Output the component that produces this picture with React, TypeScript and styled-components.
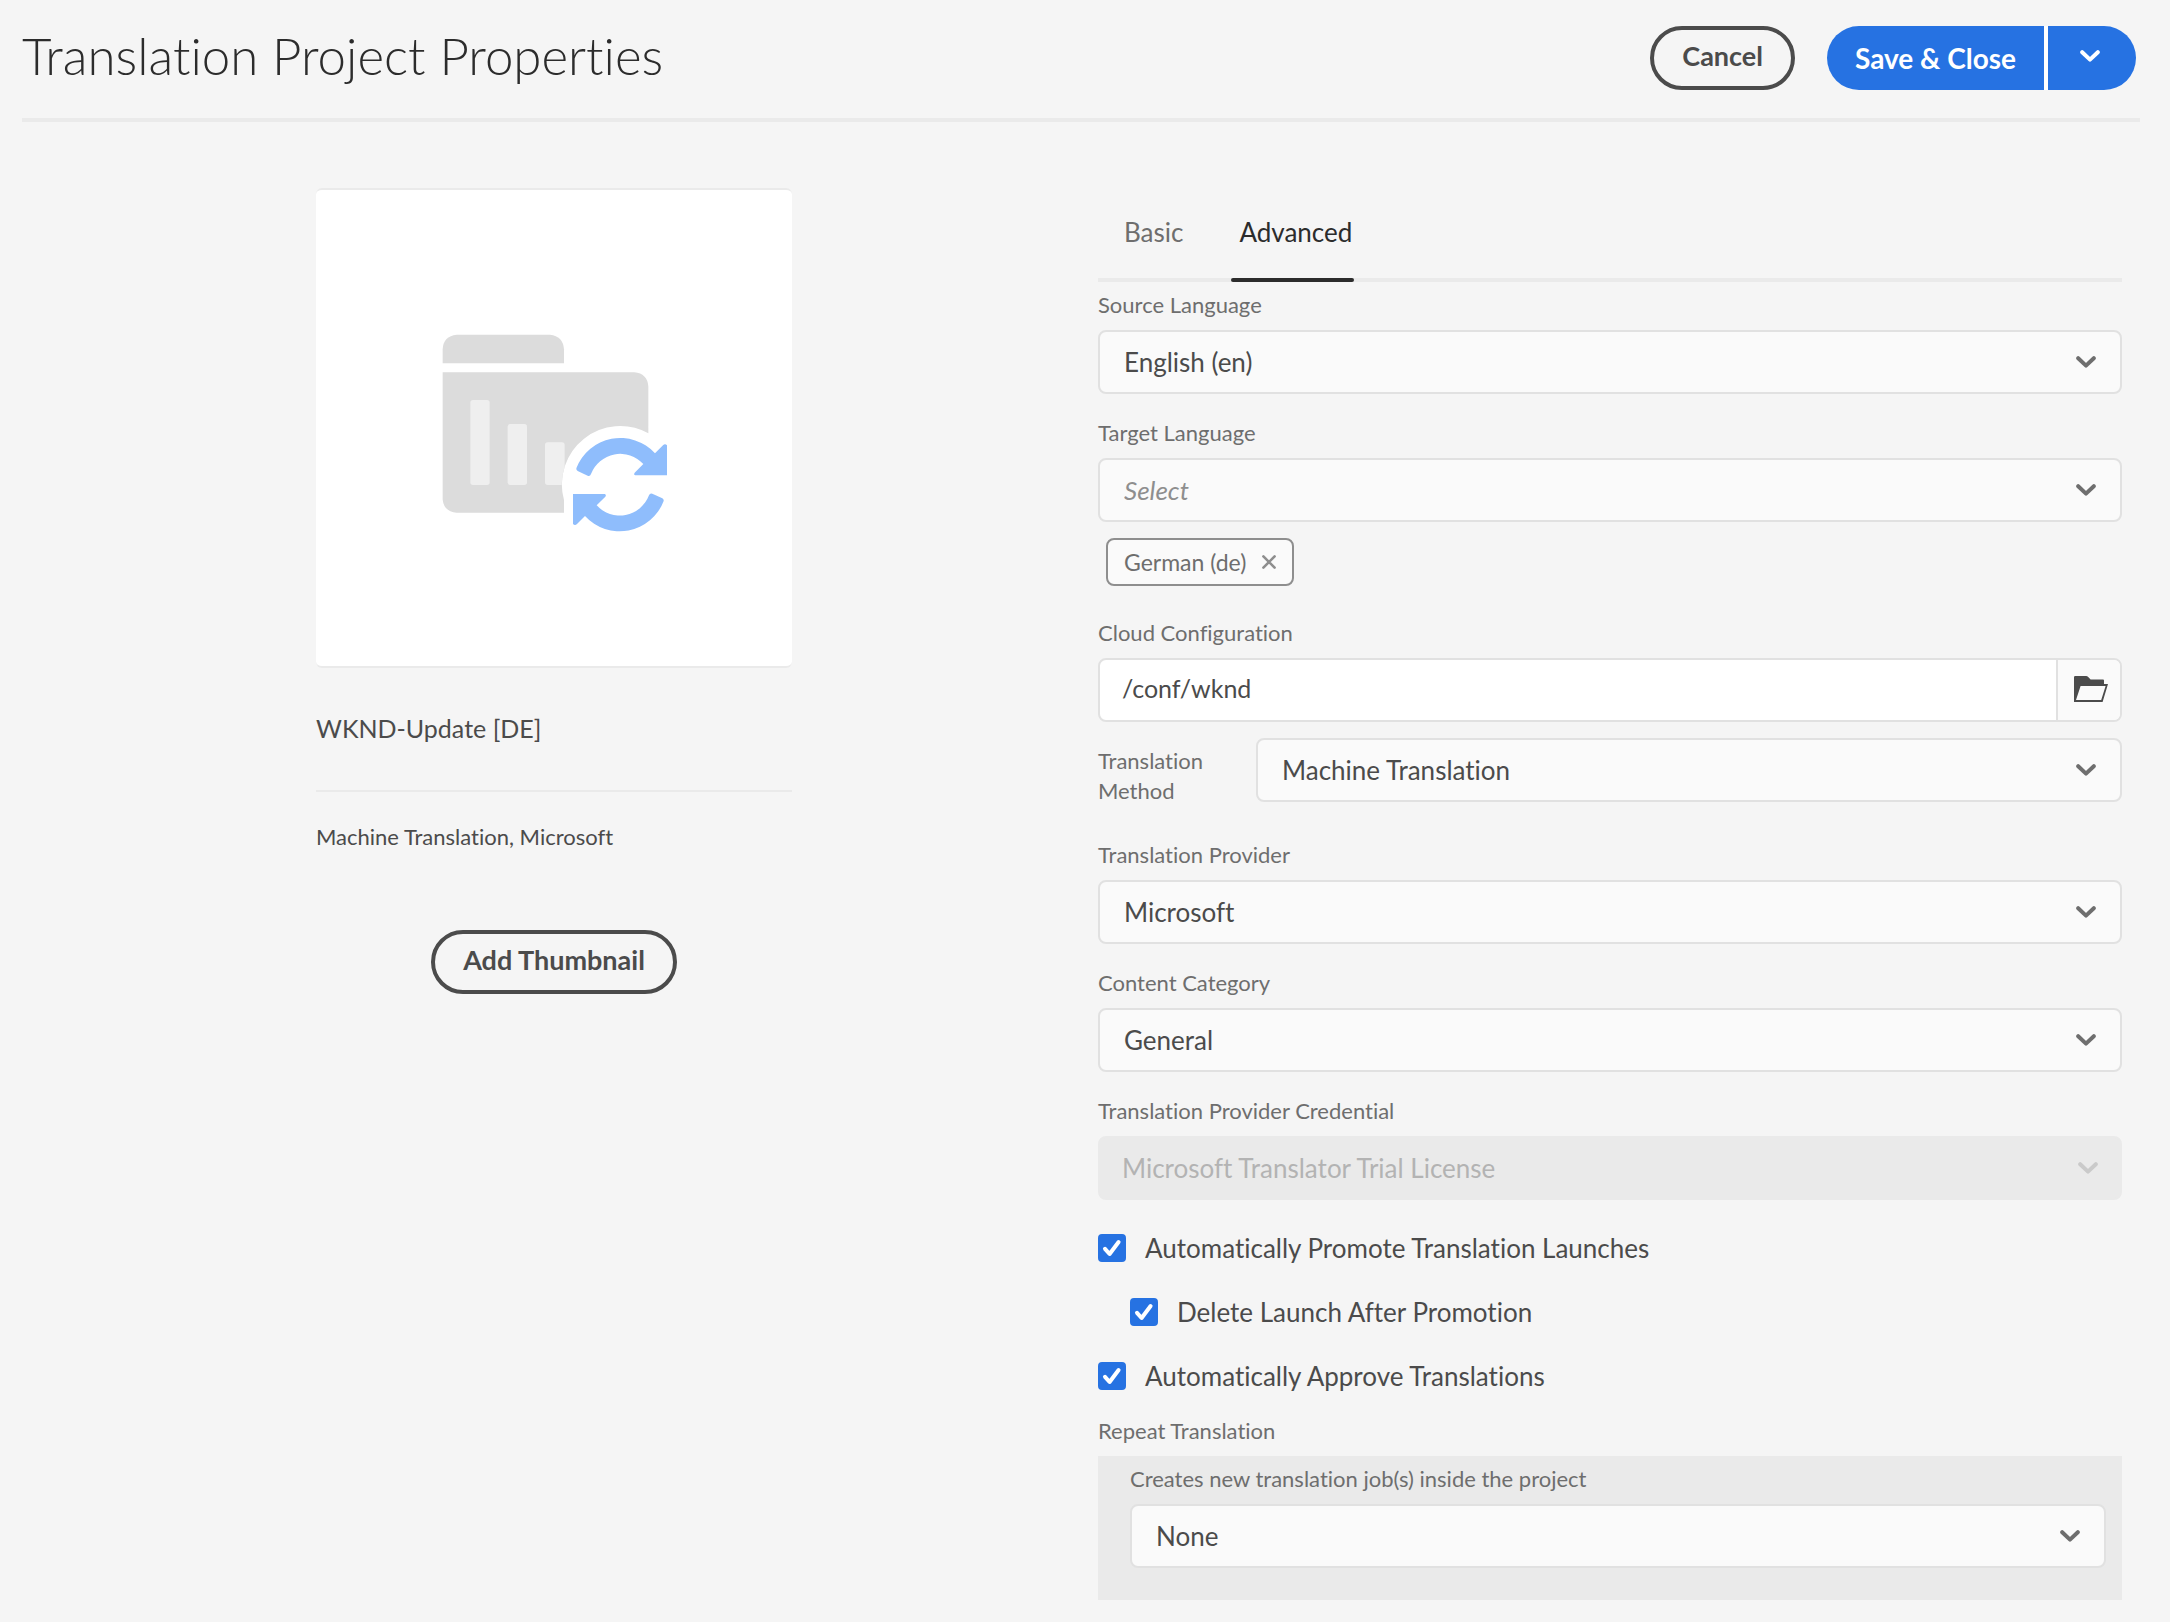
import React from "react";
import styled, { createGlobalStyle } from "styled-components";

const GlobalStyle = createGlobalStyle`
  *, *::before, *::after { box-sizing: border-box; }
  body {
    margin: 0;
    background: #f5f5f5;
    color: #4b4b4b;
    font-family: Lato, "Noto Sans", "Liberation Sans", sans-serif;
    font-size: 26px;
    line-height: 32px;
    font-variant-ligatures: no-common-ligatures;
  }
  button, input, select { font: inherit; color: inherit; margin: 0; }
  button { cursor: pointer; }
`;

const Header = styled.header`
  display: flex;
  align-items: flex-start;
  justify-content: space-between;
  margin: 0 30px 0 22px;
  padding: 26px 4px 28px 0;
  border-bottom: 4px solid #eaeaea;
`;

const PageTitle = styled.h1`
  margin: 0;
  color: #2c2c2c;
  font-size: 51px;
  line-height: 60px;
  font-weight: 300;
`;

const Actions = styled.div`
  display: flex;
  gap: 32px;
`;

const OutlineButton = styled.button`
  height: 64px;
  padding: 0 28px 4px;
  border: 4px solid #4b4b4b;
  border-radius: 32px;
  background: transparent;
  font-size: 27px;
  font-weight: 700;
`;

const SplitButton = styled.div`
  display: flex;
  gap: 4px;
  border-radius: 32px;
  overflow: hidden;
  background: #fff;
`;

const PrimaryButton = styled.button<{ $menu?: boolean }>`
  display: flex;
  align-items: center;
  justify-content: center;
  height: 64px;
  padding: ${(p) => (p.$menu ? "0 36px 4px 32px" : "0 28px")};
  border: 0;
  background: #2672e2;
  color: #fff;
  font-size: 28px;
  font-weight: 700;
`;

const Main = styled.main`
  display: grid;
  grid-template-columns: minmax(0, 1fr) minmax(0, 1fr);
  padding: 66px 48px 22px 22px;
`;

const Summary = styled.section`
  display: flex;
  flex-direction: column;
  align-items: center;
  padding-left: 14px;
`;

const Card = styled.div`
  width: 100%;
  max-width: 476px;
  text-align: center;
`;

const Thumbnail = styled.svg`
  display: block;
  width: 100%;
  background: #fff;
  border: solid #eaeaea;
  border-width: 2px 0;
  border-radius: 6px;
`;

const ProjectName = styled.h2`
  margin: 0;
  padding: 44px 0 46px;
  border-bottom: 2px solid #eaeaea;
  font-size: 25px;
  line-height: 32px;
  font-weight: 400;
  text-align: left;
`;

const ProjectMeta = styled.p`
  margin: 30px 0 78px;
  font-size: 22px;
  line-height: 30px;
  text-align: left;
`;

const Form = styled.form`
  padding-left: 26px;
`;

const TabList = styled.div`
  display: flex;
  gap: 46px;
  padding-left: 18px;
  margin-bottom: 8px;
  box-shadow: inset 0 -4px #eaeaea;
`;

const Tab = styled.button<{ $active?: boolean }>`
  display: flex;
  flex-direction: column;
  justify-content: space-between;
  height: 94px;
  padding: 28px 2px 0 8px;
  border: 0;
  background: none;
  color: ${(p) => (p.$active ? "#2c2c2c" : "#6e6e6e")};

  &::after {
    content: "";
    align-self: stretch;
    height: 4px;
    margin: 0 -2px 0 -8px;
    border-radius: 2px;
    background: ${(p) => (p.$active ? "#2c2c2c" : "transparent")};
  }
`;

const Field = styled.div<{ $tight?: boolean; $last?: boolean }>`
  display: flex;
  flex-direction: column;
  gap: 10px;
  margin-bottom: ${(p) => (p.$last ? 0 : p.$tight ? 16 : 24)}px;
`;

const Label = styled.label`
  color: #6e6e6e;
  font-size: 22px;
  line-height: 30px;
`;

const InlineField = styled.div`
  display: grid;
  grid-template-columns: 158px minmax(0, 1fr);
  align-items: start;
  margin-bottom: 34px;

  ${Label} { padding: 8px 40px 0 0; }
`;

const SelectBox = styled.div`
  display: grid;
  align-items: center;

  > * { grid-area: 1 / 1; }
  > svg {
    justify-self: end;
    margin-right: 26px;
    pointer-events: none;
  }
  > select:disabled + svg { margin-right: 24px; }
`;

const SelectInput = styled.select<{ $placeholder?: boolean }>`
  appearance: none;
  width: 100%;
  height: 64px;
  padding: 0 60px 0 24px;
  border: 2px solid #e1e1e1;
  border-radius: 8px;
  background: #fafafa;
  color: ${(p) => (p.$placeholder ? "#8e8e8e" : "#4b4b4b")};
  font-style: ${(p) => (p.$placeholder ? "italic" : "normal")};

  &:disabled {
    padding-left: 22px;
    border-color: #eaeaea;
    background: #eaeaea;
    color: #b3b3b3;
    opacity: 1;
  }
`;

const Tag = styled.span`
  display: flex;
  align-items: center;
  gap: 16px;
  width: fit-content;
  height: 48px;
  margin: -8px 0 32px 8px;
  padding: 0 16px;
  border: 2px solid #8e8e8e;
  border-radius: 8px;
  background: #fafafa;
  color: #6e6e6e;
  font-size: 23px;
  line-height: 30px;
`;

const TagRemove = styled.button`
  display: flex;
  padding: 0;
  border: 0;
  background: none;
  color: #8e8e8e;
`;

const PathPicker = styled.div`
  display: flex;
  height: 64px;
  border: 2px solid #e1e1e1;
  border-radius: 8px;
  background: #fff;
  overflow: hidden;
`;

const PathInput = styled.input`
  flex: 1;
  min-width: 0;
  padding: 0 22px 4px;
  border: 0;
  background: transparent;
  font-size: 25px;
`;

const BrowseButton = styled.button`
  display: flex;
  align-items: center;
  justify-content: center;
  width: 64px;
  padding: 0 0 2px 4px;
  border: 0;
  border-left: 2px solid #e1e1e1;
  background: #fafafa;
`;

const CheckList = styled.div`
  margin: 0 0 8px;
`;

const CheckRow = styled.label<{ $nested?: boolean }>`
  display: flex;
  align-items: center;
  gap: 19px;
  height: 64px;
  padding-left: ${(p) => (p.$nested ? 32 : 0)}px;
`;

const CheckMark = styled.span`
  display: grid;

  > * { grid-area: 1 / 1; }
  > svg { pointer-events: none; visibility: hidden; }
  > input:checked + svg { visibility: visible; }
`;

const CheckInput = styled.input`
  appearance: none;
  width: 28px;
  height: 28px;
  border: 4px solid #6e6e6e;
  border-radius: 4px;

  &:checked {
    border-color: #2672e2;
    background: #2672e2;
  }
`;

const RepeatPanel = styled.div`
  padding: 8px 16px 32px 32px;
  background: #eaeaea;
`;

function Chevron({ color }: { color: string }) {
  return (
    <svg width="20" height="12" viewBox="0 0 20 12" fill="none" aria-hidden="true">
      <path
        d="M2.2 2.2 L10 9.6 L17.8 2.2"
        stroke={color}
        strokeWidth="4"
        strokeLinecap="round"
        strokeLinejoin="round"
      />
    </svg>
  );
}

function FolderOpenIcon() {
  return (
    <svg width="34" height="26" viewBox="0 0 34 26" aria-hidden="true">
      <path
        fill="#4b4b4b"
        fillRule="evenodd"
        d="M1.2 0H12.2Q13.2 0 14 .8L16.6 3.6H29Q30 3.6 30 4.6V8H34L28.6 26H0V1.2Q0 0 1.2 0ZM6.6 10L2 24H27.2L31.6 10Z"
      />
    </svg>
  );
}

const ARROW =
  "M829 895A141 141 0 0 1 1065 850L1089 826Q1095 820 1101 826V916H1006Q1000 914 1004 908L1030 882A94 94 0 0 0 873 912Q870 920 863 917L833 903Q828 900 829 895Z";

function ProjectThumbnail() {
  return (
    <Thumbnail viewBox="48 60 1428 1428" role="img" aria-label="Translation project">
      <g fill="#dcdcdc">
        <path d="M428 580V538Q430 498 470 494H750Q789 498 792 538V580Z" />
        <path d="M428 607H1003Q1042 611 1045 649V790A175 175 0 0 0 792 990V1028H470Q432 1025 428 989Z" />
      </g>
      <g fill="#efefef">
        <rect x="511" y="690" width="58" height="255" rx="8" />
        <rect x="623" y="762" width="58" height="183" rx="8" />
        <path d="M743 817H786Q794 817 794 825V890A175 175 0 0 0 785 945H743Q735 945 735 937V825Q735 817 743 817Z" />
      </g>
      <g fill="#8fbdfc">
        <path d={ARROW} />
        <path d={ARROW} transform="rotate(180 960 944)" />
      </g>
    </Thumbnail>
  );
}

interface SelectFieldProps {
  id: string;
  value: string;
  disabled?: boolean;
  placeholder?: boolean;
}

function Select({ id, value, disabled, placeholder }: SelectFieldProps) {
  return (
    <SelectBox>
      <SelectInput id={id} defaultValue={value} disabled={disabled} $placeholder={placeholder}>
        <option>{value}</option>
      </SelectInput>
      <Chevron color={disabled ? "#cacaca" : "#6e6e6e"} />
    </SelectBox>
  );
}

function CheckField({ label, nested }: { label: string; nested?: boolean }) {
  return (
    <CheckRow $nested={nested}>
      <CheckMark>
        <CheckInput type="checkbox" defaultChecked />
        <svg width="28" height="28" viewBox="0 0 28 28" fill="none" aria-hidden="true">
          <path
            d="M7 14.8L11.6 20L20.6 8"
            stroke="#fff"
            strokeWidth="4"
            strokeLinecap="round"
            strokeLinejoin="round"
          />
        </svg>
      </CheckMark>
      {label}
    </CheckRow>
  );
}

export default function App() {
  return (
    <>
      <GlobalStyle />
      <Header>
        <PageTitle>Translation Project Properties</PageTitle>
        <Actions>
          <OutlineButton type="button">Cancel</OutlineButton>
          <SplitButton>
            <PrimaryButton type="button">Save &amp; Close</PrimaryButton>
            <PrimaryButton type="button" $menu aria-label="More save options">
              <Chevron color="#fff" />
            </PrimaryButton>
          </SplitButton>
        </Actions>
      </Header>
      <Main>
        <Summary>
          <Card>
            <ProjectThumbnail />
            <ProjectName>WKND-Update [DE]</ProjectName>
            <ProjectMeta>Machine Translation, Microsoft</ProjectMeta>
            <OutlineButton type="button">Add Thumbnail</OutlineButton>
          </Card>
        </Summary>
        <Form>
          <TabList role="tablist">
            <Tab type="button" role="tab" aria-selected={false}>Basic</Tab>
            <Tab type="button" role="tab" aria-selected $active>Advanced</Tab>
          </TabList>
          <Field>
            <Label htmlFor="source">Source Language</Label>
            <Select id="source" value="English (en)" />
          </Field>
          <Field>
            <Label htmlFor="target">Target Language</Label>
            <Select id="target" value="Select" placeholder />
          </Field>
          <Tag>
            German (de)
            <TagRemove type="button" aria-label="Remove German (de)">
              <svg width="14" height="14" viewBox="0 0 14 14" aria-hidden="true">
                <path d="M1.4 1.4L12.6 12.6M12.6 1.4L1.4 12.6" stroke="currentColor" strokeWidth="2.6" strokeLinecap="round" />
              </svg>
            </TagRemove>
          </Tag>
          <Field $tight>
            <Label htmlFor="cloud">Cloud Configuration</Label>
            <PathPicker>
              <PathInput id="cloud" type="text" defaultValue="/conf/wknd" />
              <BrowseButton type="button" aria-label="Browse">
                <FolderOpenIcon />
              </BrowseButton>
            </PathPicker>
          </Field>
          <InlineField>
            <Label htmlFor="method">Translation Method</Label>
            <Select id="method" value="Machine Translation" />
          </InlineField>
          <Field>
            <Label htmlFor="provider">Translation Provider</Label>
            <Select id="provider" value="Microsoft" />
          </Field>
          <Field>
            <Label htmlFor="category">Content Category</Label>
            <Select id="category" value="General" />
          </Field>
          <Field $tight>
            <Label htmlFor="credential">Translation Provider Credential</Label>
            <Select id="credential" value="Microsoft Translator Trial License" disabled />
          </Field>
          <CheckList>
            <CheckField label="Automatically Promote Translation Launches" />
            <CheckField label="Delete Launch After Promotion" nested />
            <CheckField label="Automatically Approve Translations" />
          </CheckList>
          <Field as="section" $last aria-labelledby="repeat-title">
            <Label as="span" id="repeat-title">Repeat Translation</Label>
            <RepeatPanel>
              <Field $last>
                <Label htmlFor="repeat">Creates new translation job(s) inside the project</Label>
                <Select id="repeat" value="None" />
              </Field>
            </RepeatPanel>
          </Field>
        </Form>
      </Main>
    </>
  );
}
